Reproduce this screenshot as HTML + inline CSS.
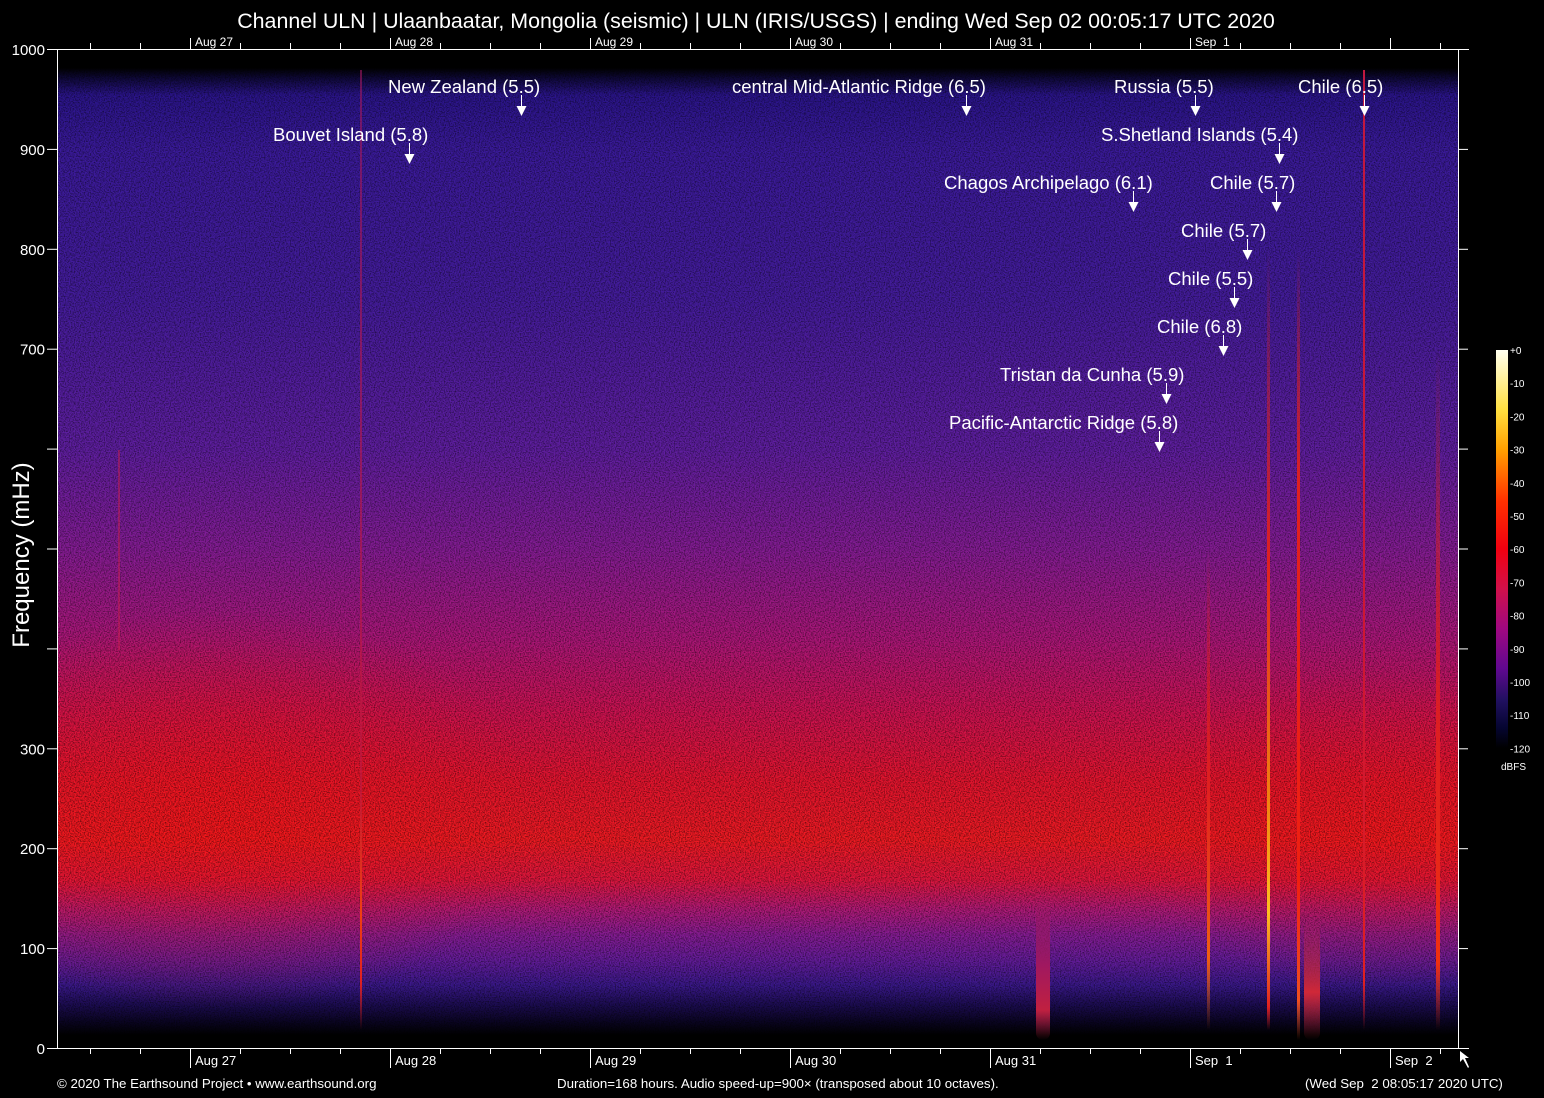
<!DOCTYPE html>
<html><head><meta charset="utf-8">
<style>
html,body{margin:0;padding:0;background:#000;width:1544px;height:1098px;overflow:hidden;font-family:"Liberation Sans",Arial,sans-serif;color:#fff;position:relative}
.a{position:absolute}
#plot{position:absolute;left:58px;top:50px;width:1400px;height:998px;overflow:hidden;
background:linear-gradient(to bottom,#000 0px,#000 18px,#0e0838 28px,#2a148a 45px,#3a1a9a 100px,#441c9c 250px,#5f1ea0 400px,#851c94 500px,#ac1678 590px,#cc1252 660px,#e4142e 730px,#f01a22 790px,#e0163e 830px,#b01a78 860px,#861c94 885px,#641c9a 910px,#3a188a 935px,#1c0c52 955px,#0a0422 972px,#000 985px,#000 998px);}
.ov{position:absolute;left:0;top:0;width:100%;height:100%}
.st{position:absolute;width:2px}
.lbl{position:absolute;font-size:18.5px;white-space:nowrap;line-height:20px}
.tl{position:absolute;font-size:13.3px;white-space:nowrap}
</style></head><body>
<div class="a" style="left:0;width:1512px;top:9px;text-align:center;font-size:21.4px">Channel ULN | Ulaanbaatar, Mongolia (seismic) | ULN (IRIS/USGS) | ending Wed Sep 02 00:05:17 UTC 2020</div>

<div id="plot">
 <div class="ov" style="background:radial-gradient(ellipse 320px 200px at 160px 760px,rgba(250,20,20,0.55),rgba(250,20,20,0) 100%)"></div>
 <div class="ov" style="background:radial-gradient(ellipse 250px 160px at 1320px 780px,rgba(250,20,20,0.4),rgba(250,20,20,0) 100%)"></div>
 <svg class="ov" width="1400" height="998"><filter id="n" x="0" y="0" width="100%" height="100%"><feTurbulence type="fractalNoise" baseFrequency="0.8" numOctaves="1" seed="3"/><feColorMatrix values="0 0 0 0 0  0 0 0 0 0  0 0 0 0 0  1.4 0 0 0 -0.55"/></filter><rect width="1400" height="998" filter="url(#n)"/></svg>
 <div class="st" style="left:302px;top:20px;height:960px;background:linear-gradient(rgba(160,24,96,.6),rgba(192,24,64,.7) 75%,#f04010 88%,#e02020 95%,transparent)"></div>
 <div class="st" style="left:60px;top:400px;height:200px;background:rgba(200,30,80,.5)"></div>
 <div class="st" style="left:1209px;top:200px;height:780px;width:3px;background:linear-gradient(transparent,#e02020 40%,#f08010 70%,#ffc020 85%,#e02020 97%,transparent)"></div>
 <div class="st" style="left:1239px;top:200px;height:790px;width:3px;background:linear-gradient(transparent,#e02020 30%,#f02010 80%,#f05020 95%,transparent)"></div>
 <div class="st" style="left:1305px;top:20px;height:960px;background:linear-gradient(#c01840,#d01830 70%,#e02020 95%,transparent)"></div>
 <div class="st" style="left:1149px;top:500px;height:480px;width:3px;background:linear-gradient(transparent,#e02020 50%,#f06010 85%,transparent)"></div>
 <div class="st" style="left:1378px;top:300px;height:680px;width:4px;background:linear-gradient(transparent,#e02020 60%,#f03010 90%,transparent)"></div>
 <div class="st" style="left:978px;top:840px;height:150px;width:14px;background:linear-gradient(transparent,#a01860 50%,#c02040 80%,transparent);border-radius:7px"></div>
 <div class="st" style="left:1246px;top:870px;height:120px;width:16px;background:linear-gradient(transparent,#d02838 60%,transparent);border-radius:7px"></div>
</div>
<svg class="a" style="left:0;top:0" width="1544" height="1098" id="ax"></svg>

<div class="lbl" style="left:388px;top:77px">New Zealand (5.5)</div>
<div class="lbl" style="left:732px;top:77px">central Mid-Atlantic Ridge (6.5)</div>
<div class="lbl" style="left:1114px;top:77px">Russia (5.5)</div>
<div class="lbl" style="left:1298px;top:77px">Chile (6.5)</div>
<div class="lbl" style="left:273px;top:125px">Bouvet Island (5.8)</div>
<div class="lbl" style="left:1101px;top:125px">S.Shetland Islands (5.4)</div>
<div class="lbl" style="left:944px;top:173px">Chagos Archipelago (6.1)</div>
<div class="lbl" style="left:1210px;top:173px">Chile (5.7)</div>
<div class="lbl" style="left:1181px;top:221px">Chile (5.7)</div>
<div class="lbl" style="left:1168px;top:269px">Chile (5.5)</div>
<div class="lbl" style="left:1157px;top:317px">Chile (6.8)</div>
<div class="lbl" style="left:1000px;top:365px">Tristan da Cunha (5.9)</div>
<div class="lbl" style="left:949px;top:413px">Pacific-Antarctic Ridge (5.8)</div>

<div class="a" style="left:1496px;top:350px;width:12px;height:398px;background:linear-gradient(#fffff0 0%,#ffe040 15%,#ffa000 25%,#ff3000 38%,#f00010 50%,#d0104a 60%,#a00880 70%,#600890 80%,#201060 88%,#050530 95%,#000 100%)"></div>
<div class="a" style="left:22px;top:555px;transform:translate(-50%,-50%) rotate(-90deg);font-size:24px;white-space:nowrap">Frequency (mHz)</div>
<div class="tl" style="left:57px;top:1076px">© 2020 The Earthsound Project • www.earthsound.org</div>
<div class="tl" style="left:557px;top:1076px">Duration=168 hours. Audio speed-up=900× (transposed about 10 octaves).</div>
<div class="tl" style="left:1305px;top:1076px">(Wed Sep&nbsp; 2 08:05:17 2020 UTC)</div>
<div class="a" style="left:1501px;top:762px;font-size:10px">dBFS</div>
<script>
var ax=document.getElementById('ax'),s='';
function L(x1,y1,x2,y2){s+='<line x1="'+x1+'" y1="'+y1+'" x2="'+x2+'" y2="'+y2+'" stroke="#fff" stroke-width="1"/>';}
L(57.5,49,57.5,1049);L(57,49.5,1469,49.5);L(57,1048.5,1469,1048.5);L(1458.5,49,1458.5,1049);
var days=['Aug 27','Aug 28','Aug 29','Aug 30','Aug 31','Sep  1','Sep  2'];
for(var x=90;x<1458;x+=50){var maj=((x-190)%200===0);
 L(x+.5,43,x+.5,49);L(x+.5,1049,x+.5,maj?1068:1054);}
for(var i=0;i<7;i++){var x=190+200*i;L(x+.5,38,x+.5,49);
 if(i<6)s+='<text x="'+(x+5)+'" y="46" fill="#fff" font-size="12" font-family="Liberation Sans,Arial" xml:space="preserve">'+days[i]+'</text>';
 s+='<text x="'+(x+5)+'" y="1065" fill="#fff" font-size="13" font-family="Liberation Sans,Arial" xml:space="preserve">'+days[i]+'</text>';}
var T=[0,100,200,300,'','','',700,800,900,1000];
for(var v=0;v<=10;v++){var y=1048-v*99.9;L(47,y+.5,57,y+.5);L(1458,y+.5,1468,y+.5);
 if(T[v]!=='')s+='<text x="45" y="'+(y+6)+'" fill="#fff" font-size="15" text-anchor="end" font-family="Liberation Sans,Arial">'+T[v]+'</text>';}
for(var k=0;k<=12;k++){var y=350+k*33.2;s+='<text x="1510" y="'+(y+4)+'" fill="#fff" font-size="10" font-family="Liberation Sans,Arial">'+(k==0?'+0':'-'+k*10)+'</text>';}
var A=[[521,95],[966,95],[1195,95],[1364,95],[409,143],[1279,143],[1133,191],[1276,191],[1247,239],[1234,287],[1223,335],[1166,383],[1159,431]];
A.forEach(function(a){L(a[0]+.5,a[1],a[0]+.5,a[1]+12);s+='<polygon points="'+(a[0]-4.5)+','+(a[1]+11)+' '+(a[0]+5.5)+','+(a[1]+11)+' '+(a[0]+.5)+','+(a[1]+21)+'" fill="#fff"/>';});
s+='<polygon points="1460,1051 1460,1062 1463,1059 1468,1068 1469,1067 1465,1058 1469,1058" fill="#fff"/>';
ax.innerHTML=s;
</script>
</body></html>
